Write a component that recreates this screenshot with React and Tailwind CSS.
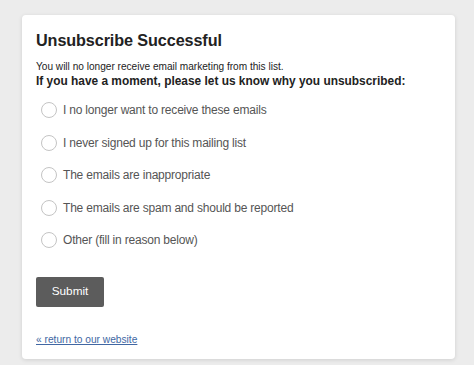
import React from "react";

const reasons = [
  "I no longer want to receive these emails",
  "I never signed up for this mailing list",
  "The emails are inappropriate",
  "The emails are spam and should be reported",
  "Other (fill in reason below)",
];

export default function App() {
  return (
    <div
      className="w-[474px] h-[365px] bg-[#ececec] pt-[15px] pl-[22px] overflow-hidden"
      style={{ fontFamily: '"Liberation Sans", Arial, sans-serif' }}
    >
      <div className="w-[433px] h-[344px] bg-white rounded-[4px] shadow-[0_1px_4px_rgba(0,0,0,0.12)] pt-[14px] pl-[14px] pr-[14px]">
        <h1 className="text-[16.2px] leading-[22px] font-bold text-[#222] tracking-[-0.1px]">Unsubscribe Successful</h1>
        <p className="mt-[9px] text-[10.1px] leading-[13px] text-[#222]">
          You will no longer receive email marketing from this list.
        </p>
        <p className="text-[11.9px] leading-[16px] font-bold text-[#222] whitespace-nowrap">
          If you have a moment, please let us know why you unsubscribed:
        </p>
        <div className="mt-[13px] flex flex-col gap-[16.5px]">
          {reasons.map((r) => (
            <label key={r} className="flex items-center h-[16px] pl-[5px]">
              <span className="w-[16px] h-[16px] rounded-full border border-[#c4c4c4] bg-white shrink-0" />
              <span className="ml-[6px] text-[12px] tracking-[-0.2px] text-[#555]">{r}</span>
            </label>
          ))}
        </div>
        <button className="mt-[29px] w-[68px] h-[30px] bg-[#5c5c5c] rounded-[2px] text-white text-[11.8px]">
          Submit
        </button>
        <div className="mt-[24px] leading-[14px]">
          <a href="#" className="text-[10.2px] text-[#4167a3] underline">
            « return to our website
          </a>
        </div>
      </div>
    </div>
  );
}
